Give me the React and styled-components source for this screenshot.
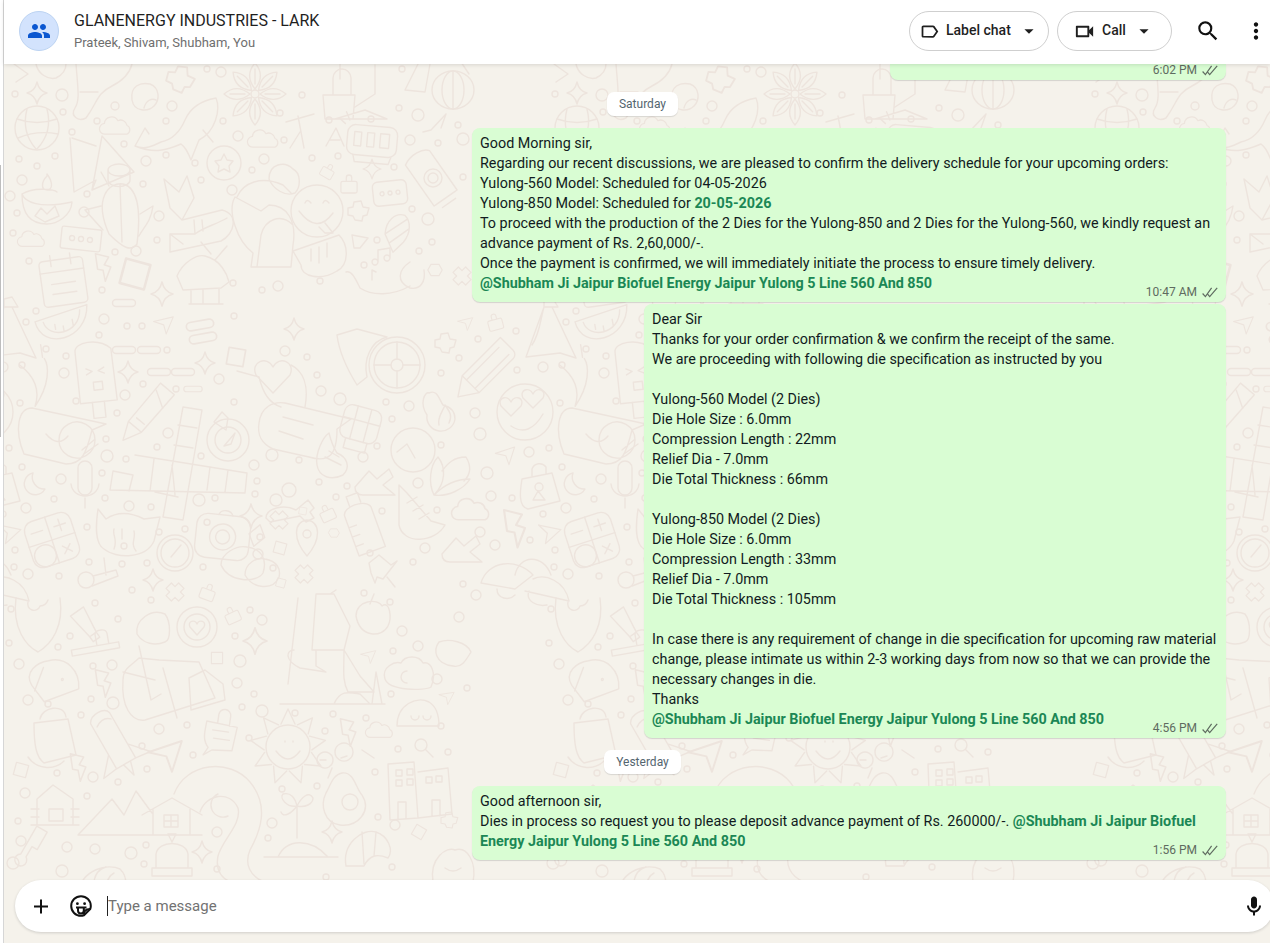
import React from 'react';
import styled, { createGlobalStyle } from 'styled-components';
import {
  MdAdd,
  MdArrowDropDown,
  MdMoreVert,
  MdOutlineLabel,
  MdOutlineMic,
  MdOutlineVideocam,
  MdPeople,
  MdSearch,
} from 'react-icons/md';

const GlobalStyle = createGlobalStyle`
  html, body {
    margin: 0;
    height: 100%;
    overflow: hidden;
    background: #fff;
    font-family: Roboto, "Liberation Sans", sans-serif;
  }
  * { box-sizing: border-box; }
`;

const Page = styled.div`
  display: flex;
  width: 1270px;
  height: 943px;
  overflow: hidden;
`;

const Rail = styled.div`
  width: 4px;
  flex: none;
  background: #fff;
  border-right: 1px solid #d6d6d6;
`;

const RailThumb = styled.div`
  width: 1px;
  height: 272px;
  margin-top: 165px;
  background: #bdbdbd;
`;

const Main = styled.main`
  position: relative;
  flex: 1;
  min-width: 0;
  display: flex;
  flex-direction: column;
  background: #f5f2eb;
`;

const Backdrop = styled.svg`
  position: absolute;
  inset: 0;
  width: 100%;
  height: 100%;
  fill: none;
  stroke: #ede4dd;
  stroke-width: 1.4;
  stroke-linecap: round;
  stroke-linejoin: round;
`;

const Header = styled.header`
  position: relative;
  z-index: 2;
  flex: none;
  height: 64px;
  display: flex;
  align-items: center;
  padding: 0 0 2px 15px;
  background: #fff;
  box-shadow: 0 1px 4px rgba(0, 0, 0, 0.12);
`;

const Avatar = styled.div`
  width: 40px;
  height: 40px;
  border-radius: 50%;
  display: flex;
  align-items: center;
  justify-content: center;
  background: #d3e3fd;
  border: 1px solid #bcd3f2;
  color: #0b57d0;
  font-size: 24px;
`;

const ChatInfo = styled.div`
  flex: 1;
  margin-left: 15px;
  display: flex;
  flex-direction: column;
  gap: 3px;
`;

const ChatTitle = styled.div`
  font-size: 16px;
  line-height: 20px;
  color: #1f1f1f;
`;

const ChatMembers = styled.div`
  font-size: 13px;
  line-height: 17px;
  color: #6f6f6f;
`;

const PillButton = styled.button`
  width: ${(p) => p.$width}px;
  height: 40px;
  margin-right: ${(p) => p.$after}px;
  padding: 0 ${(p) => p.$end}px 0 ${(p) => p.$inset}px;
  display: flex;
  align-items: center;
  background: #fff;
  border: 1px solid #cfcfcf;
  border-radius: 20px;
  font-family: inherit;
  font-size: 14px;
  font-weight: 500;
  color: #1f1f1f;

  span {
    margin-left: ${(p) => p.$gap}px;
    margin-top: -2px;
    flex: 1;
    text-align: left;
  }
`;

const IconButton = styled.button`
  width: ${(p) => p.$width}px;
  height: 40px;
  margin-left: ${(p) => p.$before || 0}px;
  padding: 0;
  display: flex;
  align-items: center;
  justify-content: center;
  background: none;
  border: 0;
  color: #111;
  font-size: 26px;
`;

const Thread = styled.div`
  position: relative;
  z-index: 1;
  flex: 1;
  min-height: 0;
  display: flex;
  flex-direction: column;
  align-items: flex-end;
  padding: 0 44px 0 55px;
`;

const Bubble = styled.div`
  position: relative;
  width: ${(p) => p.$width}px;
  margin-bottom: 2px;
  padding: 6px 7px 8px 8px;
  background: #d9fdd3;
  border-radius: 8px;
  box-shadow: 0 1px 1px rgba(11, 20, 26, 0.14);
  font-size: 14.35px;
  line-height: 20px;
  color: #111b21;
`;

const ClippedBubble = styled(Bubble)`
  height: 16px;
  padding: 0;
  border-radius: 0 0 8px 8px;
`;

const Line = styled.div`
  min-height: 20px;
`;

const Mention = styled.span`
  color: #1b8755;
  font-weight: 700;
`;

const Meta = styled.div`
  position: absolute;
  right: 8px;
  bottom: 2px;
  display: flex;
  align-items: center;
  gap: 5px;
  font-size: 12px;
  line-height: 16px;
  color: #5f6b60;

  svg {
    width: 16px;
    height: 11px;
  }
`;

const DayChip = styled.div`
  align-self: center;
  height: 24px;
  margin: 10px 0 12px;
  padding: 0 12px;
  display: flex;
  align-items: center;
  background: #fff;
  border-radius: 7px;
  box-shadow: 0 1px 1px rgba(11, 20, 26, 0.12);
  font-size: 12px;
  color: #54656f;
`;

const Composer = styled.div`
  position: relative;
  z-index: 1;
  flex: none;
  height: 52px;
  margin: 0 -4px 11px 11px;
  padding: 0 8px 0 14px;
  display: flex;
  align-items: center;
  background: #fff;
  border-radius: 26px;
  box-shadow: 0 1px 3px rgba(11, 20, 26, 0.16);
  color: #111;
`;

const ComposerIcon = styled.div`
  width: 24px;
  height: 24px;
  margin-right: ${(p) => p.$gap || 0}px;
  display: flex;
  align-items: center;
  justify-content: center;
  font-size: 25px;
  flex: none;
`;

const Placeholder = styled.div`
  flex: 1;
  height: 20px;
  border-left: 1px solid #222;
  font-size: 15px;
  line-height: 20px;
  color: #727272;
`;

const Ticks = () => (
  <svg viewBox="0 0 16 11" fill="none" stroke="#5f6b60" strokeWidth="1.2">
    <path d="M.6 6.500 3.400 9.600 9.600.8" />
    <path d="M5.400 6.800 7.700 9.600 15.200.8" />
  </svg>
);

const StickerIcon = () => (
  <svg width="24" height="24" viewBox="0 0 24 24" fill="none" stroke="#111" strokeWidth="2">
    <path d="M12 2.200a9.800 9.800 0 0 1 9.800 9.800c0 1-.2 2-.5 2.900l-6.400 6.400c-.9.3-1.900.5-2.900.5a9.800 9.800 0 0 1 0-19.600Z" />
    <circle cx="8.400" cy="9.700" r="1.400" fill="#111" stroke="none" />
    <circle cx="15.600" cy="9.700" r="1.400" fill="#111" stroke="none" />
    <path d="M7 13.600h10.500M9 13.800v2.800a2.900 2.900 0 0 0 5.800 0v-2.800M14.800 20.500c0-3 1.700-5.400 6.300-5.500" />
  </svg>
);

const at = (x, y, rot = 0, s = 1) => `translate(${x} ${y}) rotate(${rot}) scale(${s})`;

// little shapes that repeat all over the wallpaper
const SHAPES = {
  star: 'M0-11Q2-2 10 0 2 2 0 11-2 2-10 0-2-2 0-11Z',
  cloud: 'M-13 8a6 6 0 0 1-1-12 8 8 0 0 1 15-3 7 7 0 0 1 10 5 5.500 5.500 0 0 1 0 10Z',
  bolt: 'M-6-12 6-9 2-2 8 0 3 13 1 3-4 2Z',
  plane: 'M-12-2 12-10 5 12 1 1Z',
  pill: 'M-8-3.500H8A3.500 3.500 0 0 1 8 3.500H-8A3.500 3.500 0 0 1-8-3.500Z',
  lock: 'M-7-3H7a2 2 0 0 1 2 2V8a2 2 0 0 1-2 2H-7a2 2 0 0 1-2-2V-1a2 2 0 0 1 2-2ZM-3-3V-7A3 3 0 0 1 3-7V-3',
  tile: 'M-7-7H7V7H-7Z',
  hex: 'M-5-7H5L9 0 5 7H-5L-9 0Z',
  splat: 'M-4-9 3-10 5-4 11-3 9 4 5 5 4 10-3 9-5 5-10 4-10-3-5-4Z',
  cross: 'M-4-10 0-6 4-10 10-4 6 0 10 4 4 10 0 6-4 10-10 4-6 0-10-4Z',
};

const SMALL = [
  ['star', 37, 93], ['star', 372, 169, 0, 0.9], ['star', 162, 294, 0, 1.1], ['star', 128, 372],
  ['star', 205, 363], ['star', 294, 329], ['star', 153, 580], ['star', 251, 516, 0, 1.1],
  ['star', 255, 641, 0, 1.2], ['star', 202, 852], ['star', 332, 832],
  ['cloud', 117, 127, 0, 0.9], ['cloud', 265, 140, 0, 0.9], ['cloud', 33, 240, 0, 0.8],
  ['cloud', 473, 511, 0, 1.1], ['cloud', 381, 731, 0, 0.8],
  ['bolt', 102, 267, 0, 1.1], ['bolt', 102, 683, 0, 1.1], ['bolt', 77, 767, 0, 1.1],
  ['bolt', 347, 732, 0, 1.1], ['bolt', 513, 528, 0, 1.5],
  ['plane', 163, 324, 5, 0.8], ['plane', 505, 455, 0, 0.8], ['plane', 547, 532, 30, 0.9],
  ['plane', 368, 656, 5, 0.6], ['plane', 446, 697, 10, 0.6], ['plane', 165, 755, 0, 1.4], ['plane', 465, 323, 5, 0.6],
  ['pill', 124, 350], ['pill', 149, 350], ['pill', 159, 372], ['pill', 183, 372], ['pill', 193, 389, 0, 0.8],
  ['pill', 124, 303], ['pill', 200, 325, -10, 1.2], ['pill', 203, 338, -10, 1.2],
  ['lock', 349, 184, 0, 0.9], ['lock', 232, 615, -25, 0.8], ['lock', 327, 513, -25, 0.8],
  ['lock', 208, 592, 20, 0.8], ['lock', 495, 322, -15, 0.8], ['lock', 328, 171, 30, 0.7],
  ['tile', 236, 357, 10, 1.2], ['tile', 303, 511, 10, 0.5], ['tile', 280, 548, 15, 0.8], ['tile', 281, 583, 15, 0.6],
  ['tile', 21, 770, 15, 0.9], ['tile', 419, 832, 30, 0.8], ['tile', 135, 274, 15, 1.8], ['tile', 217, 658, 0, 0.8],
  ['hex', 435, 270, 0, 0.8], ['hex', 334, 533, 0, 0.6],
  ['splat', 358, 211], ['splat', 445, 343], ['splat', 449, 820, 0, 0.8], ['splat', 180, 79, 15, 1.3],
  ['cross', 462, 276, 0, 0.9], ['cross', 279, 520, 0, 0.9], ['cross', 304, 574, 0, 0.9], ['cross', 175, 592, 0, 0.9],
];

const DOTS = [
  [15, 94, 3], [62, 95, 6], [115, 106, 4], [172, 106, 5], [207, 69, 3], [221, 72, 5], [302, 95, 3], [402, 69, 3],
  [399, 108, 3], [418, 115, 6], [280, 113, 3], [238, 136, 5], [223, 121, 3], [166, 121, 3], [97, 121, 3],
  [63, 112, 3], [72, 132, 3], [124, 144, 3], [284, 140, 3], [329, 120, 3], [371, 119, 3], [410, 140, 5],
  [438, 143, 3], [463, 139, 6], [458, 125, 3], [166, 155, 3], [146, 161, 5], [195, 163, 3], [264, 159, 5],
  [312, 158, 3], [338, 156, 3], [252, 170, 3], [201, 180, 3], [232, 190, 5], [19, 159, 3], [37, 166, 3],
  [55, 156, 3], [22, 180, 5], [10, 196, 5], [87, 194, 3], [143, 184, 3], [159, 216, 5], [84, 212, 5],
  [17, 213, 3], [13, 233, 3], [157, 240, 3], [115, 252, 3], [136, 251, 5], [29, 261, 3], [102, 290, 3],
  [233, 283, 3], [278, 286, 5], [262, 290, 3], [320, 281, 3], [364, 265, 3], [377, 240, 3], [412, 209, 3],
  [428, 219, 6], [394, 167, 3], [463, 177, 3], [432, 242, 3], [419, 251, 3],
  [36, 311, 3], [26, 322, 3], [104, 319, 5], [99, 335, 3], [127, 326, 3], [142, 326, 3], [46, 349, 3],
  [66, 356, 3], [64, 373, 5], [22, 365, 3], [167, 350, 3], [219, 379, 5], [143, 384, 3], [176, 389, 3],
  [125, 395, 5], [76, 401, 3], [20, 403, 3], [234, 316, 3], [285, 351, 5], [307, 357, 3], [234, 402, 3],
  [317, 375, 3], [321, 391, 5], [340, 399, 6], [386, 402, 3], [392, 419, 3], [117, 413, 3], [168, 433, 5],
  [157, 447, 3], [106, 439, 3], [9, 448, 3], [107, 456, 6], [126, 459, 3], [201, 456, 3], [254, 465, 5],
  [272, 455, 6], [299, 460, 3], [363, 457, 5], [377, 446, 3], [22, 467, 3], [61, 479, 5], [102, 473, 3],
  [257, 481, 3], [255, 494, 3], [319, 482, 3], [347, 486, 3], [336, 497, 3], [54, 499, 3], [105, 498, 3],
  [199, 500, 6], [215, 498, 3], [26, 508, 5], [129, 506, 5], [151, 507, 3], [382, 511, 3], [87, 527, 3],
  [159, 532, 3], [185, 529, 3], [260, 537, 3], [15, 550, 3], [370, 553, 3], [258, 554, 5], [89, 562, 3],
  [14, 567, 3], [122, 564, 3], [147, 563, 3], [203, 567, 3], [273, 568, 3], [28, 574, 5], [59, 576, 3],
  [132, 590, 3], [11, 609, 3], [95, 603, 3], [118, 619, 3], [151, 600, 3], [250, 610, 3], [262, 620, 5],
  [235, 636, 3], [240, 661, 6], [237, 683, 5], [254, 694, 3], [242, 707, 3], [262, 711, 6], [295, 713, 3],
  [333, 714, 3], [366, 718, 3], [402, 631, 5], [390, 602, 3], [364, 593, 3], [459, 617, 5], [393, 651, 3],
  [418, 646, 5], [437, 679, 5], [391, 694, 3], [467, 688, 3], [441, 726, 3], [58, 647, 3], [70, 636, 3],
  [9, 643, 3], [19, 664, 5], [112, 665, 5], [93, 666, 3], [28, 700, 5], [91, 699, 3], [48, 704, 3],
  [113, 703, 6], [81, 715, 3], [159, 729, 5], [187, 725, 3], [142, 746, 3], [147, 769, 3], [193, 755, 3],
  [249, 738, 3], [325, 731, 3], [398, 749, 3], [448, 752, 3], [375, 772, 3], [93, 777, 5], [118, 782, 3],
  [57, 773, 3], [25, 793, 5], [87, 796, 3], [282, 789, 3], [317, 786, 3], [18, 821, 3], [272, 823, 5],
  [378, 817, 3], [395, 825, 5], [217, 832, 5], [268, 838, 3], [21, 841, 5], [67, 847, 5], [95, 849, 5],
  [131, 853, 6], [146, 845, 3], [144, 864, 3], [62, 871, 6], [13, 863, 6], [217, 869, 3], [392, 867, 3],
  [326, 877, 3], [516, 331, 3], [478, 339, 3], [459, 358, 3], [441, 373, 3], [517, 370, 3], [543, 367, 5],
  [409, 406, 5], [475, 413, 5], [480, 434, 6], [441, 445, 3], [529, 452, 5], [418, 483, 5], [487, 473, 6],
  [491, 496, 5], [512, 498, 3], [437, 510, 3], [543, 514, 3], [480, 532, 5], [530, 540, 3], [425, 548, 5],
  [495, 545, 5], [413, 562, 3], [463, 584, 3], [476, 595, 5],
];

// one 540px wide tile of the wallpaper, drawn in page coordinates
const WallpaperTile = () => (
  <g id="tile">
    {DOTS.map(([x, y, r], i) => <circle key={i} cx={x} cy={y} r={r} />)}
    {SMALL.map(([name, x, y, rot, s], i) => (
      <path key={i} d={SHAPES[name]} transform={at(x, y, rot, s)} />
    ))}

    {/* legs and leaves along the top */}
    <path d="M76 64C78 90 80 100 75 108 70 116 78 122 86 118 98 102 96 94 112 86 124 80 130 72 132 64M80 92H98M36 64C38 74 48 80 56 78 64 74 66 68 66 64M14 64 28 74 16 82" />
    {/* rock */}
    <path d="M132 100C130 86 140 82 150 84 160 88 160 100 154 106 148 112 134 112 132 100ZM144 108C146 100 152 98 156 100" />
    {/* globe */}
    <g transform={at(37, 128)}>
      <circle r="22" />
      <path d="M-20-9Q0-2 20-9M-19 10Q0 2 21 6M-10-19Q-16 4-1 21M10-19Q16 4 0 21" />
    </g>
    {/* flower */}
    <g transform={at(255, 94)}>
      {[0, 45, 90, 135, 180, 225, 270, 315].map((r) => (
        <path key={r} d="M0-5C-8-15-6-24 0-31 6-24 8-15 0-5ZM0-10V-25" transform={`rotate(${r})`} />
      ))}
      <circle r="4" />
    </g>
    {/* whale */}
    <path transform={at(175, 130)} d="M-40 16C-30 20-22 16-14 12-4 10 4 4 10-10 16-24 30-30 41-32 46-20 40 2 24 10L16 30C12 20 10 17 6 14-8 20-20 24-40 16ZM-40 16-30-2-26 4M28 0 38 12" />
    {/* pot plant */}
    <path transform={at(345, 95)} d="M-22 0H10L8 24H-20ZM-12 0V-17A9 9 0 0 1 6-17V0M10 12 30-1V-30M-10 24 20 15 42 24H-14ZM25-32H-5V-16" />
    {/* lantern */}
    <g transform={at(453, 90)}>
      <ellipse rx="21" ry="19" />
      <ellipse rx="11" ry="19" />
      <path d="M0-19V19M8-28 16-16M-7 24-22 40-30 42M-12 38-7 24" />
    </g>
    {/* fin by the lantern */}
    <path d="M405 90 418 64M405 90 425 92 430 64" />
    {/* translate strokes */}
    <path d="M286 122 314 114M298 116 304 148M300 132 290 148M326 146 336 128 344 146M330 140H340" />
    {/* tent */}
    <path transform={at(100, 160)} d="M-30-22-26 32-4 20-8 30 34 12 2-24-8 30M-28-22-4-14M8 20A10 6 0 0 0 30 20V8M8 10A11 6 0 1 0 30 10 11 6 0 1 0 8 10V20" />
    {/* star coin */}
    <g transform={at(224, 163)}>
      <circle r="17" />
      <path d="M0-9 3-3 9-2 5 3 6 9 0 6-6 9-5 3-9-2-3-3Z" />
    </g>
    {/* clock */}
    <g transform={at(372, 142, 5)}>
      <rect x="-25" y="-16" width="50" height="30" rx="8" />
      <rect x="-18" y="-9" width="7" height="14" />
      <rect x="-5" y="-9" width="7" height="14" />
      <rect x="8" y="-9" width="9" height="14" />
      <path d="M-18 14-16 21H18L20 14M-33-20-28-16M-28-28-24-20" />
    </g>
    {/* fox */}
    <path transform={at(197, 208)} d="M-33-29-18-16-10-32-3-10-15 12-27 0ZM-15 12 25 2C42 6 38 26 24 33L-27 44V26L-2 26C5 20 20 16 30 10M-2 26-3 12M6 23 5 12M-27 26-14 36" />
    {/* seated man with smile */}
    <g transform={at(287, 205)}>
      <path d="M-18-26C-18-42-2-44 6-36 14-32 14-18 8-12-2-8-14-16-18-26ZM-50-8C-44-22-26-30-4-20L4-12M-52-8-26 6-18 0C0 0 10 16 6 40L4 62H-36L-34 48C-50 36-60 6-52-8ZM-30 62-26 30C-22 14-6 8 6 20" />
      <circle cx="30" cy="6" r="26" />
      <path d="M12 6Q30 30 46 8M18-2Q20-7 24-2M36-2Q38-7 42-2M38 18 46 28 38 28 32 22" />
      <path d="M6 46 52 30C62 40 62 60 50 66 34 76 14 72 14 60ZM24 56V44M32 58V42M40 52V38" />
    </g>
    {/* cactus */}
    <path transform={at(123, 214)} d="M-14 20C-30-16-14-32 0-30 16-26 18-2 14 30 8 38 0 34-14 20ZM-3-30-1 28M-14-28-22-42M-22-8-38-4-20 16M17 0 30-8C28 8 20 14 16 22" />
    {/* diya */}
    <path transform={at(47, 204)} d="M-25-10C-25 20-5 20 0 20 10 20 24 12 25-2-8 5-22-2-25-10ZM-25-10C-12-18 8-14 10-12M0-28C-6-22-6-14 0-14 6-14 6-22 0-30ZM-12 12-6 4 0 10 8 2 12 12-2 18Z" />
    {/* hut */}
    <path transform={at(197, 278)} d="M-20-2C-14-16 0-24 8-22 24-18 30-4 32 4L24 10-14 12ZM-6 12V26H22V10M-8 26H26M6 12V26M18-18 30-32M14-24 4-36" />
    {/* calendar */}
    <g transform={at(63, 279, -8)}>
      <rect x="-22" y="-20" width="44" height="46" rx="4" />
      <path d="M-22-8H22M-10-25V-14M10-25V-14M-12 4H12M-12 14H12" />
    </g>
    {/* keypad */}
    <g transform={at(81, 239, 6)}>
      <rect x="-20" y="-11" width="40" height="22" rx="2" />
      <circle cx="-9" r="2.500" />
      <circle r="2.500" />
      <circle cx="9" r="2.500" />
    </g>
    {/* password */}
    <g transform={at(390, 193, -6)}>
      <rect x="-17" y="-12" width="34" height="24" rx="5" />
      <circle cx="-8" r="2" />
      <circle r="2" />
      <circle cx="8" r="2" />
    </g>
    {/* sunscreen */}
    <path transform={at(433, 180, -35)} d="M-14-28C-4-34 10-32 14-26L14 22H-14ZM-8 28H8M-12 22H12" />
    <g transform={at(433, 178)}>
      <circle r="5" />
      <circle r="9" />
    </g>
    {/* shell, music, hand */}
    <path transform={at(396, 231, 30)} d="M0-18C-10-16-14-4-8 8L8 20 12 6C14-6 8-16 0-18ZM-8 8 4-16M0 14 10-8" />
    <path d="M378 262V250L390 248V258M378 262A3 3 0 1 1 378 261.900M390 258A3 3 0 1 1 390 257.900M372 280V270L376 272" />
    <path d="M352 235 368 238 360 248 354 248Z" />
    <path d="M346 272C352 270 356 280 360 288 372 296 392 296 410 286M410 262C398 270 396 282 410 288 420 290 426 282 424 270" />
    {/* melon, ice cream, pepper, volcano */}
    <path transform={at(63, 325, -10)} d="M-27-8C-25 22 22 20 27-16ZM-19-6C-16 12 15 12 19-12M-8-2V3M0 1V6M10-4V2" />
    <path transform={at(95, 370, -6)} d="M-18-20C-18-30 6-32 18-20L19 32H-18ZM-6 32V48H6V32M-9-2-3 1-9 4M9-2 3 1 9 4M-3 12H6V20H-3Z" />
    <path transform={at(37, 375, 30)} d="M-20 0C-4 2 10 10 14 28 16 2 6-14-2-18M-4-18-12-28" />
    <path transform={at(8, 333)} d="M-22 24 12 20 28 25 4-26-4-26ZM-4-26C-8-12-8 0-16 12M10-26H-4V-34L4-36Z" />
    {/* pen, crossword, compass */}
    <path transform={at(143, 418, 40)} d="M-9-38H9L8 12-1 30-9 12ZM-9 12H8M-5 4H5M-8-30 9-20" />
    <path d="M183 407 202 410 183 520 163 517ZM135 455 247 473 245 493 110 490 113 471 133 475M178 425 197 428M174 445 193 448M155 492 178 497M210 467 207 490M228 470 225 492M133 475 129 491M154 459 150 491M175 495 172 465" />
    <g transform={at(228, 440)}>
      <circle r="21" />
      <circle r="13" />
      <path d="M-4 6 7-7 3 4ZM-14-18-2-10 0-22-6-28Z" />
    </g>
    {/* speech bubble with smiley */}
    <path transform={at(62, 430)} d="M-38 24C-48 0-44-22-30-22L44-6 30 0C24 24 20 34 4 34ZM-3 10A18 18 0 1 0-3 9.900M-16 4Q-4 18 6 6M22 24 36 14M20 20 32 10" />
    {/* heart over speech bubble */}
    <path transform={at(273, 385)} d="M0 8-17-10C-23-23-6-30 0-18 6-30 23-23 17-10ZM-36-14-14-8C-10 8-4 18 8 22M18-20C30-14 36 0 32 22" />
    <path transform={at(295, 427)} d="M-36-4C-34-20-22-26-10-24L56-8 42 2C42 28 34 36 14 30L-22 22C-34 16-38 8-36-4ZM-12-10 18-2M-16 4 8 12" />
    <g transform={at(360, 423, 15)}>
      <rect x="-18" y="-16" width="38" height="34" rx="8" />
      <path d="M-18-2H20M-6-16V18M8-16V18M-10 18V28H12V18" />
    </g>
    {/* hands */}
    <path transform={at(333, 457)} d="M-16 8C-18-4-10-20-4-24-2-16 0-10 4-4 14 0 18 10 10 18-2 24-14 20-16 8ZM-4-6 6 0M-8 0 8 8" />
    <path transform={at(373, 483)} d="M-18 4-4-12 4-4 16-14 20-6 10 2 22 12H-10C-16 12-18 8-18 4Z" />
    <path transform={at(460, 550)} d="M-18 4-4-12 4-4 16-14 20-6 10 2 22 12H-10C-16 12-18 8-18 4Z" />
    <path transform={at(413, 513)} d="M-14-28-6-20 18 8 32 12C22 30-10 32-14 12ZM-6-10 4-16M0-2 10-8M6 6 16 0" />
    {/* friends and a plus */}
    <path d="M270 500A6 6 0 1 0 282 500 6 6 0 1 0 270 500ZM282 490A7 7 0 1 0 296 490 7 7 0 1 0 282 490ZM266 518C266 508 284 504 296 510L308 500 314 508 310 512 314 518 306 522 300 516 270 522Z" />
    {/* bottle */}
    <path transform={at(362, 523, -20)} d="M-14-12C-14-22 12-22 14-12V30H-14ZM-6-20V-30H6V-20M-14 0H-6M-14 10H-6M-14 20H-6" />
    {/* cat, camera, pin, calc, mic, moon */}
    <path transform={at(124, 525)} d="M-26-16-18-6C-6-14 8-12 20-6L36-8 30 16C22 34-8 34-20 24-30 18-28-2-26-16ZM-10 4C-12 10-6 14-10 24M10 6C12 14 6 18 12 26M-2 4V14M0 24A3 3 0 1 0 0 18 3 3 0 1 0 0 24" />
    <g transform={at(223, 533, 6)}>
      <rect x="-27" y="-18" width="54" height="44" rx="11" />
      <circle cy="4" r="13" />
      <circle cy="4" r="7" />
      <circle cx="-17" cy="-9" r="3" />
      <path d="M-6-18C-4-24 6-24 8-18M36-12 42 0 32 10 26-2Z" />
    </g>
    <path transform={at(307, 538)} d="M0 18C-14 2-14-16 0-18 14-16 14 2 0 18ZM0-8A4 4 0 1 0 0 0 4 4 0 1 0 0-8Z" />
    <g transform={at(52, 540, -18)}>
      <rect x="-24" y="-24" width="48" height="48" rx="10" />
      <path d="M-24 0H24M0-24V24M-18-12H-6M12-18V-6M6-12H18M8 9 16 17M16 9 8 17" />
      <circle cx="-11" cy="13" r="11" />
    </g>
    <path transform={at(85, 490)} d="M-7-22A7 7 0 0 1 7-22V-2A7 7 0 0 1-7-2ZM-14-6C-12 10 12 10 14-6M0 8V18" />
    <path transform={at(35, 485)} d="M-2-12A11 11 0 1 0 10 4 12 12 0 0 1-2-12Z" />
    {/* gauge, dumplings, pushpin, scissors */}
    <g transform={at(175, 553)}>
      <circle r="18" />
      <circle r="14" />
      <path d="M-4 4 6-8" />
    </g>
    <path transform={at(243, 565)} d="M-22 0C-22-12-6-20 4-18 20-16 24-4 20 8 14 18-14 18-22 0ZM2 10C2-2 14-8 22-6 34-4 38 4 36 12 30 26 10 24 2 10Z" />
    <path transform={at(383, 573)} d="M-14-10-4-18 8-8 14-12 0 6-6 4-8 10-12 0ZM4 4 12 14" />
    <path transform={at(86, 580)} d="M-8 0A8 8 0 1 0 8 0 8 8 0 1 0-8 0ZM7-4 30-10 32-4 6 6M20-5 18-22" />
    {/* wheel, pencil, flame, heart eyes, corn, gauge */}
    <g transform={at(397, 365)}>
      <circle r="28" />
      <circle r="23" />
      <circle r="6" />
      <path d="M-23 0H-6M6 0H23M0-23V-6M0 6V23" />
      <path d="M-60-30-40-36-10-28C-26-24-34-6-30 12L-40 20C-50 4-58-14-60-30Z" />
    </g>
    <path transform={at(482, 370, 45)} d="M-10-36H8A6 6 0 0 1 14-30V18H-10ZM-4-28V18M8-30V18M-10 18 2 36 14 18" />
    <path transform={at(443, 413)} d="M-16 2C-24-10-18-22-14-20-6-24-4-14 0-8 8-6 12-2 12 6A14 14 0 0 1-16 2ZM-4 12C-6 4 0-2 2-8 6-2 10 2 6 10" />
    <g transform={at(525, 412)}>
      <circle r="28" />
      <path d="M-14 4-24-6C-28-14-18-18-14-10-10-18 0-14-4-6ZM8-4 -2-14C-6-22 4-26 8-18 12-26 22-22 18-14ZM-14 14Q4 26 18 2" />
    </g>
    <path transform={at(450, 475)} d="M-16 20C-22 8-20-10-12-18-4-8-4 8-16 20ZM-16 20C-2 22 14 14 20 4 6 4-6 10-16 20ZM-8-4C-2-12 4-18 16-18 22-8 20 0 14 6" />
    <g transform={at(413, 450)}>
      <circle r="22" />
      <path d="M-16 2-6-6 2 8" />
    </g>
    <g transform={at(538, 487)}>
      <path d="M-16-8 14-14 22 14-10 22C-20 20-18 4-16-8ZM-6-11V-18A8 8 0 0 1 8-20V-13" />
      <circle cx="1" cy="0" r="4" />
      <path d="M0 4-5 13H7Z" />
    </g>
    <path transform={at(517, 577)} d="M-36 6C-30-16 0-20 16-2L-2 12ZM-2-2C2-22 26-24 34-2M16 2C28-4 48 4 52 24L8 14M-20 12C-20 22-8 24-2 18M12 14C8 24 20 30 30 28" />
    {/* shield, tube, tray, latte */}
    <path transform={at(38, 620)} d="M-22-22C-26 8-12 26 0 32 14 24 26 6 22-22M-10-18A6 6 0 0 0 2-14 9 9 0 0 0 10-20" />
    <path transform={at(85, 623, -35)} d="M-8-14H8L4 14H-4ZM-4 14V20H4V14" />
    <path transform={at(95, 646, -10)} d="M-24 0H24V6H-24ZM2 0V-12C4-16 14-16 14-10V0" />
    <g transform={at(197, 627)}>
      <circle r="20" />
      <circle r="13" />
      <path d="M0 8-7 0C-10-6-2-8 0-3 2-8 10-6 7 0Z" />
    </g>
    {/* person with glasses */}
    <path transform={at(165, 670)} d="M-28-36C-30-50-14-62 0-56 6-48 6-30 0-28-10-24-22-26-28-36ZM-26-24-14 30-4 24M-6-10 34-8 50 28-20 50C-34 52-44 36-42 10-42-2-34-4-26-12ZM-2-2 12 48M24 8 40 0 58 14 60 30 26 40ZM-42 2-10 10" />
    <path transform={at(55, 678, -8)} d="M-24 4C-30-10-16-18-4-18 14-20 26-4 22 14L-14 22ZM-10-12-22 10M8 2A1 1 0 1 0 8 3" />
    {/* hiker */}
    <path transform={at(330, 650)} d="M-14-56H4L20-24 14 0-18 0ZM0-56 6-60M-14 0V16L-4 22-30 18C-46 10-44 0-36 0M14 0 30 26 44 42H18C12 30 14 20 14 0ZM-50 54H55M-32-52-42 34M4 54C10 40 18 42 30 44L40 54M42 54 46 22 52 54" />
    <path transform={at(372, 622)} d="M-16-6C-16-22 6-24 10-16 18-22 20-4 16 4 10 16-12 16-16-6ZM-2-18 2-28" />
    <path transform={at(407, 675)} d="M-22 4C-26-8-12-14-6-12-2-20 12-20 16-12 24-14 30-2 24 12 18 16-18 16-22 4ZM0-4A6 6 0 1 0 0 8" />
    <path transform={at(457, 650)} d="M-18-8C-8-12 10-8 14 2 8 12 4 18-4 16-22 14-24 0-18-8Z" />
    <path transform={at(417, 712)} d="M-20 14C-20-8 0-16 12-10 22-4 22 10 22 14ZM-6 4A4 4 0 1 0 2 4M6 4A4 4 0 1 0 14 4" />
    {/* grocery, rocket, bag */}
    <path transform={at(50, 733)} d="M-16-10 18-14 26 22-6 30C-14 24-16 12-16-10ZM-10-14C-8-26 14-30 16-16M-22 24C-14 36 4 38 14 28" />
    <path transform={at(115, 742, -30)} d="M-12-28C-8-36 8-36 10-28L10 24H-12ZM-12 8-28 26-12 24M10 8 26 26 10 24M-4 24 0 38 4 24M-8-22C-2-26 4-26 8-22" />
    <path transform={at(220, 735, 8)} d="M-15-12 16-10 14 14-6 16-14 22-10 14C-16 8-16 2-15-12ZM-8-4H8M-6 4H10M-4-12V-20A6 6 0 0 1 8-20V-10" />
    {/* sun */}
    <g transform={at(288, 747)}>
      <circle r="22" />
      <path d="M-12 4Q0 20 12 4M-3-6V-5M5-6V-5" />
      {[0, 40, 80, 120, 160, 200, 240, 280, 320].map((r) => (
        <path key={r} d="M-7-23 0-38 7-23" transform={`rotate(${r})`} />
      ))}
    </g>
    {/* lens, glasses, buildings, egg */}
    <path transform={at(421, 745)} d="M-6 0A6 6 0 1 0 6 0 6 6 0 1 0-6 0ZM5 5 12 12" />
    <path transform={at(350, 760)} d="M-17 0A8 8 0 1 0-17 .100M3-8A9 9 0 1 0 3-7.900M-9-2-3-4M12-10 24-2M-18 8-22 18M-24 0H-30" />
    <g transform={at(420, 788)}>
      <path d="M-32-24-6-26-2 30-30 32ZM-2-16 28-20 32 26-2 30M-22 32V14H-14V30M12 28V12H20V28" />
      <rect x="-24" y="-18" width="6" height="6" />
      <rect x="-13" y="-19" width="6" height="6" />
      <rect x="-24" y="-8" width="6" height="6" />
      <rect x="-13" y="-9" width="6" height="6" />
      <rect x="6" y="-11" width="6" height="6" />
      <rect x="16" y="-12" width="6" height="6" />
    </g>
    <g transform={at(350, 797)}>
      <path d="M-8-24C4-26 6-8 12-2 22 14 8 30-10 28-26 26-30 8-24-4-20-10-18-22-8-24Z" />
      <circle cy="5" r="8" />
    </g>
    <path transform={at(368, 848)} d="M-22 18C-26-4-6-20 8-16 20-12 26 2 20 10 10 6 2 6-4 18ZM-6-16-4 16M8-16 6 8" />
    {/* road, moon, cabin, mountains */}
    <path transform={at(220, 820)} d="M-46-26C-34-58 10-62 30-38 50-14 40 12 30 30 24 44 30 56 44 62M-20-8C-14-26 10-30 18-12 22 4 2 20-2 36-4 46-2 56 10 62" />
    <path transform={at(218, 808)} d="M0-14A12 12 0 1 0 10 8 12 12 0 0 1 0-14Z" />
    <path transform={at(170, 815)} d="M-28 0 2-17 32 0M-17-6V20H20V-6M-6 0H8V12H-6ZM1 0V12M-6 6H8M-92 20-58-16-46 0-34-24-18-2M-92 20H32" />
    <path transform={at(55, 807)} d="M-18-8-2-22 18-8V18H-18ZM-24 2H-16M-24 10H-16M-24 18H-16M16 2H24M16 10H24M16 18H24M-6 2H8V14H-6Z" />
    <path transform={at(300, 857)} d="M-22 0C-14-18 10-20 28 0M-36 0H38" />
    <path transform={at(297, 812)} d="M0 26V-6M0-6C-10-4-18-14-14-18-6-20-2-14 0-6 4-14 12-22 16-14 16-8 8-4 0-6M0-6C-6 2-14 6-16 0" />
    <path transform={at(172, 860)} d="M-16 8V-6C-14-20 14-20 16-6V8M-20 8H20V16H-20ZM0-18 -4-26 4-26Z" />
    <path transform={at(453, 868)} d="M-20 14C-24-10-6-22 2-18 14-22 24-6 20 14ZM-8 0Q0 6 8 0" />
    <path transform={at(100, 873)} d="M-22 20C-18-4 8-10 20-4 30 6 24 16 22 20M-6 18Q-8-2 6-6M6 18Q6 4 14 0" />
    <path transform={at(30, 850, 30)} d="M-6-24H6V-4H0V8A6 6 0 1 1-6 8Z" />
  </g>
);

const Wallpaper = () => (
  <Backdrop viewBox="4 0 1266 943" aria-hidden="true">
    <defs>
      <WallpaperTile />
    </defs>
    {[-540, 0, 540, 1080].map((dx) => (
      <use key={dx} href="#tile" x={dx} />
    ))}
  </Backdrop>
);

const MESSAGES = {
  sat: [
    'Good Morning sir,',
    'Regarding our recent discussions, we are pleased to confirm the delivery schedule for your upcoming orders:',
    'Yulong-560 Model: Scheduled for 04-05-2026',
  ],
  sat2: [
    'To proceed with the production of the 2 Dies for the Yulong-850 and 2 Dies for the Yulong-560, we kindly request an advance payment of Rs. 2,60,000/-.',
    'Once the payment is confirmed, we will immediately initiate the process to ensure timely delivery.',
  ],
  spec: [
    'Dear Sir',
    'Thanks for your order confirmation & we confirm the receipt of the same.',
    'We are proceeding with following die specification as instructed by you',
    '',
    'Yulong-560 Model (2 Dies)',
    'Die Hole Size : 6.0mm',
    'Compression Length : 22mm',
    'Relief Dia - 7.0mm',
    'Die Total Thickness : 66mm',
    '',
    'Yulong-850 Model (2 Dies)',
    'Die Hole Size : 6.0mm',
    'Compression Length : 33mm',
    'Relief Dia - 7.0mm',
    'Die Total Thickness : 105mm',
    '',
    'In case there is any requirement of change in die specification for upcoming raw material change, please intimate us within 2-3 working days from now so that we can provide the necessary changes in die.',
    'Thanks',
  ],
};

const MENTION = '@Shubham Ji Jaipur Biofuel Energy Jaipur Yulong 5 Line 560 And 850';

const Lines = ({ items }) => items.map((text, i) => <Line key={i}>{text}</Line>);

const Time = ({ children }) => (
  <Meta>
    {children}
    <Ticks />
  </Meta>
);

export default function App() {
  return (
    <Page>
      <GlobalStyle />
      <Rail>
        <RailThumb />
      </Rail>
      <Main>
        <Wallpaper />
        <Header>
          <Avatar>
            <MdPeople />
          </Avatar>
          <ChatInfo>
            <ChatTitle>GLANENERGY INDUSTRIES - LARK</ChatTitle>
            <ChatMembers>Prateek, Shivam, Shubham, You</ChatMembers>
          </ChatInfo>
          <PillButton $width={140} $inset={9} $gap={6} $after={8} $end={8}>
            <MdOutlineLabel size={21} />
            <span>Label chat</span>
            <MdArrowDropDown size={22} />
          </PillButton>
          <PillButton $width={115} $inset={15} $gap={6} $after={12} $end={16}>
            <MdOutlineVideocam size={23} />
            <span>Call</span>
            <MdArrowDropDown size={22} />
          </PillButton>
          <IconButton $width={48}>
            <MdSearch />
          </IconButton>
          <IconButton $width={28} $before={10}>
            <MdMoreVert />
          </IconButton>
        </Header>

        <Thread>
          <ClippedBubble $width={336}>
            <Time>6:02 PM</Time>
          </ClippedBubble>

          <DayChip>Saturday</DayChip>

          <Bubble $width={754}>
            <Lines items={MESSAGES.sat} />
            <Line>
              Yulong-850 Model: Scheduled for <Mention>20-05-2026</Mention>
            </Line>
            <Lines items={MESSAGES.sat2} />
            <Line>
              <Mention>{MENTION}</Mention>
            </Line>
            <Time>10:47 AM</Time>
          </Bubble>

          <Bubble $width={582}>
            <Lines items={MESSAGES.spec} />
            <Line>
              <Mention>{MENTION}</Mention>
            </Line>
            <Time>4:56 PM</Time>
          </Bubble>

          <DayChip>Yesterday</DayChip>

          <Bubble $width={754}>
            <Line>Good afternoon sir,</Line>
            <Line>
              Dies in process so request you to please deposit advance payment of Rs. 260000/-.{' '}
              <Mention>{MENTION}</Mention>
            </Line>
            <Time>1:56 PM</Time>
          </Bubble>
        </Thread>

        <Composer>
          <ComposerIcon $gap={16}>
            <MdAdd />
          </ComposerIcon>
          <ComposerIcon $gap={14}>
            <StickerIcon />
          </ComposerIcon>
          <Placeholder>Type a message</Placeholder>
          <ComposerIcon>
            <MdOutlineMic />
          </ComposerIcon>
        </Composer>
      </Main>
    </Page>
  );
}
